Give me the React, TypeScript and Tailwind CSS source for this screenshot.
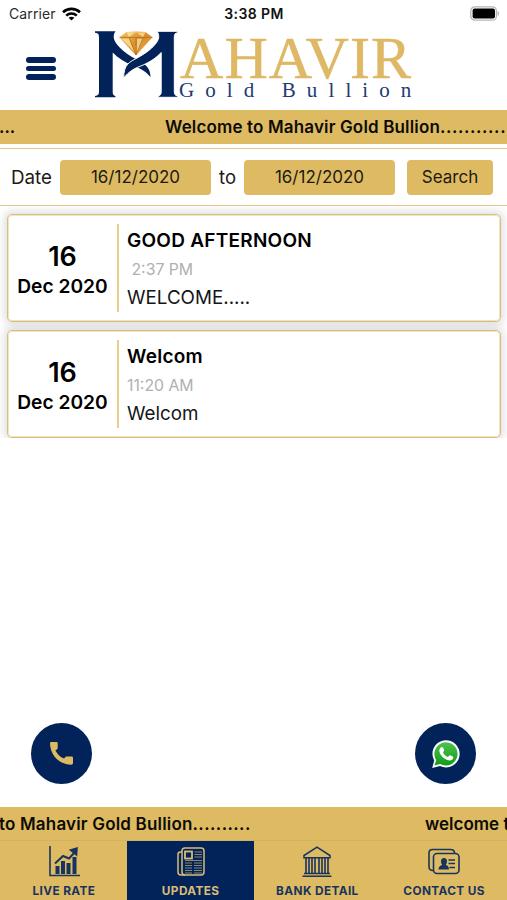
interface Update {
  day: string;
  month: string;
  title: string;
  time: string;
  body: string;
}

const updates: Update[] = [
  { day: "16", month: "Dec 2020", title: "GOOD AFTERNOON", time: " 2:37 PM", body: "WELCOME....." },
  { day: "16", month: "Dec 2020", title: "Welcom", time: "11:20 AM", body: "Welcom" },
];

function StatusBar() {
  return (
    <div className="flex h-[27px] items-center justify-between pl-[9px] pr-[7px]">
      <div className="flex w-[180px] items-center gap-[6px]">
        <span className="text-[14px] tracking-[0.1px] text-[#2b2b2b]">Carrier</span>
        <svg width="19" height="14" viewBox="0 0 19 14" fill="none" stroke="#000" strokeWidth="2.6">
          <path d="M1 5.2C5.8.7 13.2.7 18 5.2" />
          <path d="M4.2 8.6c3-2.8 7.6-2.8 10.6 0" />
          <path d="M9.5 13.6 6.6 10.8c1.7-1.5 4.1-1.5 5.8 0z" fill="#000" stroke="none" />
        </svg>
      </div>
      <span className="-ml-px text-[14px] font-semibold tracking-[0.4px] text-[#111]">3:38 PM</span>
      <div className="flex w-[180px] justify-end">
        <svg width="30" height="15" viewBox="0 0 30 15">
          <rect x=".8" y=".8" width="25.6" height="13.4" rx="4" fill="#fff" stroke="#b5b5b5" strokeWidth="1.3" />
          <rect x="2.6" y="2.6" width="22.4" height="9.8" rx="2" fill="#000" />
          <path d="M27.6 5c1.8.6 1.8 4.4 0 5z" fill="#aaa" />
        </svg>
      </div>
    </div>
  );
}

function Logo() {
  return (
    <svg width="332" height="72" viewBox="0 0 332 72">
      <defs>
        <linearGradient id="gem" x1="0" y1="0" x2="1" y2="1">
          <stop offset="0" stopColor="#f3c565" />
          <stop offset=".5" stopColor="#d98f2b" />
          <stop offset="1" stopColor="#f0b84f" />
        </linearGradient>
      </defs>
      <g fill="#02235a">
        <path d="M1 1.3h20.500C18.500 5.500 19.500 10 23 14.500 27 19.500 32 23.500 38 27c10 6 18.500 8 18.500 20C52 42 48 39 40 36 31 32.500 24 28 18.700 22.500V61c0 3.400.6 4.500 2.700 4.900v1.400H1v-1.400C4.400 65.500 5 64.400 5 61V7.600C5 4.200 4.400 3.100 1 2.700z" />
        <path
          d="M83.800 1.300v1.400c-2.900.4-3.500 1.500-3.500 4.900V61c0 3.400.6 4.500 3.500 4.900v1.400H64.200v-1.400c2.400-.4 3-1.500 3-4.900V22.500C62 28 57 31.500 48 35.500 40 38.500 35 41.500 29.700 48c0-14 6-16 14.300-20.500 7-4 13-8 17-13C65 10 66 5.500 63 1.300z"
          stroke="#fff"
          strokeWidth="1"
        />
      </g>
      <path d="M32.500 2 42 1.400 51.500 2l7 5.300L42 25.600 25.300 7.300z" fill="url(#gem)" />
      <path d="M32.500 2 35 7.300l7-5.600 7 5.600L51.500 2l-4 .500zM35 8.500 40.500 22 28 9z" fill="#ffe6a2" opacity=".75" />
      <path d="m49 8.500-6 14.500V9z" fill="#fff0bd" opacity=".6" />
      <path d="M25.500 7.400h33M35 7.400 42 25l7.200-17.600M42 7.400V25" fill="none" stroke="#a85e1a" strokeWidth=".600" />
      <text x="86" y="48" textLength="231" fontSize="60" fill="#deb864" stroke="#deb864" strokeWidth=".500" fontFamily="Liberation Serif, serif">
        AHAVIR
      </text>
      <text x="85" y="67.300" fontSize="21" letterSpacing="11.100" fill="#1d3b70" fontFamily="Liberation Serif, serif">
        Gold Bullion
      </text>
    </svg>
  );
}

function UpdateCard({ update }: { update: Update }) {
  return (
    <div className="flex h-[108px] shrink-0 rounded-[5px] border border-[#d9bf7c] bg-white shadow-[0_0_8px_3px_rgba(0,0,0,0.12)] outline-1 -outline-offset-2 outline-[#f0e4c4]">
      <div className="flex w-[109px] shrink-0 flex-col items-center pt-[27px] font-semibold text-black">
        <span className="text-[27px] leading-[30px]">{update.day}</span>
        <span className="text-[19.2px] leading-[29px]">{update.month}</span>
      </div>
      <div className="mt-[9px] h-[88px] w-[1.5px] bg-[#e9cf8e]" />
      <div className="flex flex-col pl-[8.500px] pt-[11px]">
        <span className="text-[19px] font-semibold leading-[30px] tracking-[0.250px] text-black">{update.title}</span>
        <span className="whitespace-pre text-[15.800px] leading-[27px] text-[#b0b0b0]">{update.time}</span>
        <span className="text-[18.800px] leading-[30px] text-[#151515]">{update.body}</span>
      </div>
    </div>
  );
}

function ChartIcon() {
  return (
    <svg width="32" height="32" viewBox="0 0 32 32" fill="none" stroke="#173460" strokeWidth="1.600">
      <path d="M2 0v29.500h30" />
      <path d="M7 17.500 15 10l6 2.500L28 5" strokeWidth="2" />
      <path d="m22.500 4 6.500-2-.5 7z" fill="#173460" />
      <path d="M9.500 28v-8M15 28V15M20.500 28V17M26.500 28V11" strokeWidth="4" />
    </svg>
  );
}

function NewsIcon() {
  return (
    <svg width="30" height="32" viewBox="0 0 30 32" fill="none" stroke="#d9bd77" strokeWidth="1.500">
      <rect x="6" y="2" width="22" height="27" rx="3" />
      <path d="M6 6H4.500Q2 6 2 8.500V26q0 3 3 3h4" />
      <rect x="9" y="5.500" width="7" height="7" strokeWidth="1.800" />
      <path
        d="M18.500 6H26M18.500 8.500H26M18.500 11H26M9 14.500h17M9 17h7M18 17h8M9 19.500h7M18 19.500h8M9 22h7M18 22h8M9 24.500h7M18 24.500h8M9 27h7M18 27h8"
        strokeWidth="1"
        opacity=".65"
      />
    </svg>
  );
}

function BankIcon() {
  return (
    <svg width="32" height="32" viewBox="0 0 32 32" fill="none" stroke="#173460" strokeWidth="1.500">
      <path d="m16 1.200 13 8.300v2.300H3V9.500z" />
      <path d="M5 12v15M8 12v15M11 12v15M14 12v15M18 12v15M21 12v15M24 12v15M27 12v15" strokeWidth="1.600" />
      <path d="M3 27.500h26M1.500 30.200h29" />
    </svg>
  );
}

function ContactIcon() {
  return (
    <svg width="32" height="32" viewBox="0 0 32 32" fill="none" stroke="#173460" strokeWidth="1.600">
      <path d="M5 24.500q-4 0-4-4V7q0-3.500 3.500-3.500h18Q26.500 3.500 26.500 7" />
      <rect x="5.500" y="7.500" width="25.500" height="20" rx="3.500" />
      <path
        d="M10.500 23.500c0-3 1.500-3.800 3.800-4.500-1.500-1.300-2.500-7 1.700-7s3.200 5.700 1.700 7c2.300.7 3.300 1.500 3.300 4.500z"
        fill="#173460"
        stroke="none"
      />
      <path d="M20.500 14H27M20.500 17.500H27M21.500 21.500H27" />
    </svg>
  );
}

function PhoneIcon() {
  return (
    <svg width="23" height="23" viewBox="0 0 23 23" fill="#debb63">
      <path d="M0 1.200Q0 0 1.200 0h5.300Q7.700 0 7.700 1.200V6q0 1.300-1.200 1.700l-1.200.4c1.700 4 4.800 7.100 8.800 8.500l.9-1.200q.500-.8 1.500-.8h5.200q1.300 0 1.300 1.300V21q0 1.700-1.700 1.700C9.500 22.500.2 13.500 0 1.200z" />
    </svg>
  );
}

function WhatsAppIcon() {
  return (
    <svg width="30" height="30" viewBox="0 0 30 30">
      <defs>
        <linearGradient id="bubble" x1="0" y1="0" x2="0" y2="1">
          <stop offset="0" stopColor="#4fc24f" />
          <stop offset="1" stopColor="#109c19" />
        </linearGradient>
      </defs>
      <path d="M1.200 29 3.200 21.500A13.600 13.600 0 1 1 9 27z" fill="#fff" />
      <path d="M3.500 26.600 5.200 21.200A11.600 11.600 0 1 1 9.200 25z" fill="url(#bubble)" />
      <path
        d="M9.700 8.500c.8-.8 2-.8 2.400.2l1 2.300c.3.800-.9 1.900-1.100 2.400 1 2 2.800 3.600 4.900 4.500.8-.4 1.400-2 2.200-1.700l2.700 1.300c.9.500.4 2.200-.4 2.900-1.400 1.200-3.300 1.300-5 .6-4-1.500-7-4.500-8-8.300-.3-1.400.100-3.100 1.300-4.200z"
        fill="#fff"
      />
    </svg>
  );
}

const tabs = [
  { label: "LIVE RATE", icon: <ChartIcon /> },
  { label: "UPDATES", icon: <NewsIcon />, active: true },
  { label: "BANK DETAIL", icon: <BankIcon /> },
  { label: "CONTACT US", icon: <ContactIcon /> },
];

export default function App() {
  return (
    <div className="flex h-[900px] w-[507px] flex-col overflow-hidden bg-white font-['Inter',sans-serif]">
      <StatusBar />

      <header className="flex h-[83px] shrink-0 items-start">
        <button className="ml-[26px] mt-[30px] flex w-[30px] flex-col gap-[3px]">
          <span className="h-[5.500px] w-full rounded-full bg-[#02235a]" />
          <span className="h-[5.500px] w-full rounded-full bg-[#02235a]" />
          <span className="h-[5.500px] w-full rounded-full bg-[#02235a]" />
        </button>
        <div className="ml-[38px] mt-[3px]">
          <Logo />
        </div>
      </header>

      {/* top ticker */}
      <div className="flex h-[34px] shrink-0 items-center overflow-hidden whitespace-nowrap bg-[#debb63] pt-[2px] text-[17px] font-semibold text-[#0d0b05]">
        <div className="flex w-[165px] shrink-0 justify-start">
          <span className="-ml-px">...</span>
        </div>
        <span className="tracking-[0.150px]">Welcome to Mahavir Gold Bullion</span>
        <span className="tracking-[0.600px]">............</span>
      </div>

      <div className="mt-[4px] flex h-[58px] shrink-0 items-center border-y border-[#e6c88a] pl-[11px] text-[17px] leading-[35px] text-[#1c1a12]">
        <span className="w-[49px] text-[18.800px]">Date</span>
        <button className="h-[35px] w-[151px] rounded-[4px] bg-[#debb63]">16/12/2020</button>
        <span className="w-[33px] text-center text-[18.500px]">to</span>
        <button className="h-[35px] w-[151px] rounded-[4px] bg-[#debb63]">16/12/2020</button>
        <button className="ml-[12px] h-[35px] w-[86px] rounded-[4px] bg-[#debb63]">Search</button>
      </div>

      {/* list is clipped right under the last card */}
      <div className="flex h-[232px] shrink-0 flex-col gap-[8.400px] overflow-hidden pl-[7px] pr-[6px] pt-[8px]">
        {updates.map((update) => (
          <UpdateCard key={update.title} update={update} />
        ))}
      </div>

      <div className="flex flex-1 items-end justify-between pb-[23px] pl-[31px] pr-[31px]">
        <button className="flex size-[61px] items-center justify-center rounded-full bg-[#02235a]">
          <PhoneIcon />
        </button>
        <button className="flex size-[61px] items-center justify-center rounded-full bg-[#02235a]">
          <WhatsAppIcon />
        </button>
      </div>

      {/* bottom ticker */}
      <div className="flex h-[33px] shrink-0 items-center overflow-hidden whitespace-nowrap bg-[#debb63] pt-[2px] text-[17px] font-semibold text-[#0d0b05]">
        <div className="flex w-[425px] shrink-0">
          <span className="-ml-px tracking-[0.180px]">to Mahavir Gold Bullion</span>
          <span className="tracking-[0.400px]">..........</span>
        </div>
        <span>welcome to</span>
      </div>

      <nav className="grid h-[60px] shrink-0 grid-cols-4 border-t border-[#d0b26a] bg-[#debb63]">
        {tabs.map((tab) => (
          <button
            key={tab.label}
            className={`flex flex-col items-center pl-px pt-[5px] text-[11.800px] font-bold tracking-[0.400px] ${
              tab.active ? "bg-[#02235a] text-[#d9bd77]" : "text-[#173460]"
            }`}
          >
            {tab.icon}
            <span className="mt-[4px] leading-[18px]">{tab.label}</span>
          </button>
        ))}
      </nav>
    </div>
  );
}
